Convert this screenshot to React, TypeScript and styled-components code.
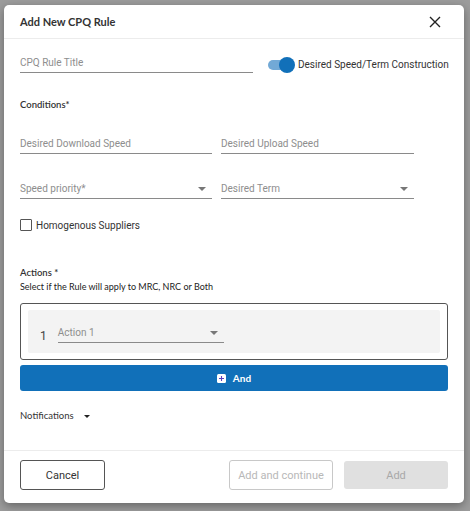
import styled, { createGlobalStyle } from "styled-components";

const GlobalStyle = createGlobalStyle`
  html, body {
    margin: 0;
    padding: 0;
    height: 511px;
    overflow: hidden;
  }
  body {
    font-family: Roboto, "Liberation Sans", sans-serif;
  }
`;

const blue = "#1170b9";

export default function App() {
  return (
    <>
      <GlobalStyle />
      <Backdrop>
        <Modal>
          <Header>
            <Title>Add New CPQ Rule</Title>
            <CloseButton aria-label="close">
              <svg width="12" height="12" viewBox="0 0 12 12">
                <path d="M1 1L11 11M11 1L1 11" stroke="#222" strokeWidth="1.4" />
              </svg>
            </CloseButton>
          </Header>

          <Body>
            <TopRow>
              <Field $width={233}>
                <Placeholder>CPQ Rule Title</Placeholder>
              </Field>
              <ToggleWrap>
                <Track>
                  <Thumb />
                </Track>
                <ToggleLabel>Desired Speed/Term Construction</ToggleLabel>
              </ToggleWrap>
            </TopRow>

            <SectionLabel $mt={25}>Conditions*</SectionLabel>

            <FieldRow $mt={19}>
              <Field $width={192}>
                <Placeholder>Desired Download Speed</Placeholder>
              </Field>
              <Field $width={193}>
                <Placeholder>Desired Upload Speed</Placeholder>
              </Field>
            </FieldRow>

            <FieldRow $mt={22}>
              <Field $width={192}>
                <Placeholder>Speed priority*</Placeholder>
                <Caret />
              </Field>
              <Field $width={193}>
                <Placeholder>Desired Term</Placeholder>
                <Caret />
              </Field>
            </FieldRow>

            <CheckRow>
              <CheckBox />
              <CheckLabel>Homogenous Suppliers</CheckLabel>
            </CheckRow>

            <SectionLabel $mt={35}>Actions *</SectionLabel>
            <SubText>Select if the Rule will apply to MRC, NRC or Both</SubText>

            <ActionBox>
              <ActionItem>
                <ActionIndex>1</ActionIndex>
                <Field $width={166}>
                  <Placeholder>Action 1</Placeholder>
                  <Caret />
                </Field>
              </ActionItem>
            </ActionBox>

            <AndButton>
              <PlusIcon>
                <svg width="9" height="9" viewBox="0 0 9 9">
                  <rect width="9" height="9" rx="1.5" fill="#fff" />
                  <path d="M4.5 2V7M2 4.5H7" stroke="#5a3fbf" strokeWidth="1.1" />
                </svg>
              </PlusIcon>
              And
            </AndButton>

            <NotifRow>
              Notifications
              <NotifCaret />
            </NotifRow>
          </Body>

          <Footer>
            <CancelButton>Cancel</CancelButton>
            <FooterRight>
              <OutlineDisabled>Add and continue</OutlineDisabled>
              <FilledDisabled>Add</FilledDisabled>
            </FooterRight>
          </Footer>
        </Modal>
      </Backdrop>
    </>
  );
}

//style
const Backdrop = styled.div`
  width: 470px;
  height: 511px;
  box-sizing: border-box;
  background-color: #9c9c9c;
  padding: 5px 6px 8px 4px;
`;

const Modal = styled.div`
  width: 460px;
  height: 498px;
  background: #fff;
  border-radius: 5px;
  box-shadow: 0 3px 10px rgba(0, 0, 0, 0.35);
  display: flex;
  flex-direction: column;
  overflow: hidden;
`;

const Header = styled.div`
  height: 33px;
  flex-shrink: 0;
  display: flex;
  align-items: center;
  justify-content: space-between;
  padding: 0 23px 0 16px;
  border-bottom: 1px solid #ececec;
`;

const Title = styled.h2`
  margin: 0;
  font-family: Lato, "Liberation Sans", sans-serif;
  font-size: 11px;
  font-weight: 700;
  color: #333;
`;

const CloseButton = styled.button`
  border: none;
  background: none;
  padding: 0;
  display: flex;
  cursor: pointer;
`;

const Body = styled.div`
  flex: 1;
  padding: 0 16px;
  overflow: hidden;
`;

const TopRow = styled.div`
  margin-top: 11px;
  display: flex;
  align-items: center;
  gap: 15px;
`;

const FieldRow = styled.div<{ $mt: number }>`
  margin-top: ${(p) => p.$mt}px;
  display: flex;
  gap: 9px;
`;

const Field = styled.div<{ $width: number }>`
  width: ${(p) => p.$width}px;
  height: 23px;
  box-sizing: border-box;
  border-bottom: 1px solid #8a8a8a;
  display: flex;
  align-items: flex-end;
  justify-content: space-between;
  padding: 0 6px 3px 0;
`;

const Placeholder = styled.span`
  font-size: 10px;
  color: #8e8e8e;
  line-height: 12px;
`;

const Caret = styled.span`
  width: 0;
  height: 0;
  border-left: 4px solid transparent;
  border-right: 4px solid transparent;
  border-top: 4px solid #777;
  margin-bottom: 4px;
`;

const ToggleWrap = styled.div`
  display: flex;
  align-items: center;
  gap: 5px;
  margin-top: 6px;
  margin-right: -16px;
`;

const Track = styled.div`
  position: relative;
  width: 22px;
  height: 10px;
  border-radius: 5px;
  background: #72a9d6;
  margin-right: 3px;
`;

const Thumb = styled.span`
  position: absolute;
  right: -5px;
  top: -3px;
  width: 16px;
  height: 16px;
  border-radius: 50%;
  background: ${blue};
`;

const ToggleLabel = styled.span`
  font-size: 10px;
  color: #333;
  white-space: nowrap;
`;

const SectionLabel = styled.div<{ $mt: number }>`
  margin-top: ${(p) => p.$mt}px;
  font-family: Lato, "Liberation Sans", sans-serif;
  font-size: 9.5px;
  font-weight: 600;
  color: #333;
  line-height: 14px;
`;

const SubText = styled.div`
  font-family: Lato, "Liberation Sans", sans-serif;
  font-size: 9px;
  color: #222;
  line-height: 13px;
`;

const CheckRow = styled.div`
  margin-top: 20px;
  display: flex;
  align-items: center;
  gap: 4px;
  height: 12px;
`;

const CheckBox = styled.span`
  width: 10px;
  height: 10px;
  border: 1px solid #555;
  border-radius: 1px;
`;

const CheckLabel = styled.span`
  font-size: 10px;
  color: #333;
`;

const ActionBox = styled.div`
  margin-top: 10px;
  height: 57px;
  box-sizing: border-box;
  border: 1px solid #555;
  border-radius: 3px;
  padding: 6px 7px;
`;

const ActionItem = styled.div`
  height: 100%;
  background: #f3f3f3;
  border-radius: 2px;
  display: flex;
  align-items: flex-start;
  padding: 10px 0 0 12px;
  box-sizing: border-box;
  gap: 11px;
`;

const ActionIndex = styled.span`
  font-size: 12px;
  color: #444;
  margin-top: 9px;
`;

const AndButton = styled.button`
  margin-top: 5px;
  width: 428px;
  height: 26px;
  border: none;
  border-radius: 3px;
  background: ${blue};
  color: #fff;
  font-family: Lato, "Liberation Sans", sans-serif;
  font-size: 10px;
  font-weight: 700;
  display: flex;
  align-items: center;
  justify-content: center;
  gap: 7px;
  cursor: pointer;
`;

const PlusIcon = styled.span`
  display: flex;
`;

const NotifRow = styled.div`
  margin-top: 18px;
  font-family: Lato, "Liberation Sans", sans-serif;
  font-size: 9.5px;
  color: #333;
  display: flex;
  align-items: center;
  gap: 10px;
  line-height: 14px;
`;

const NotifCaret = styled.span`
  width: 0;
  height: 0;
  border-left: 3.5px solid transparent;
  border-right: 3.5px solid transparent;
  border-top: 3.5px solid #222;
`;

const Footer = styled.div`
  height: 53px;
  flex-shrink: 0;
  box-sizing: border-box;
  border-top: 1px solid #ececec;
  padding: 9px 16px 0 16px;
  display: flex;
  justify-content: space-between;
  align-items: flex-start;
`;

const FooterRight = styled.div`
  display: flex;
  gap: 11px;
`;

const BaseButton = styled.button`
  height: 30px;
  box-sizing: border-box;
  border-radius: 3px;
  font-family: Roboto, "Liberation Sans", sans-serif;
  font-size: 11px;
  padding: 0;
`;

const CancelButton = styled(BaseButton)`
  width: 85px;
  border: 1px solid #555;
  background: #fff;
  color: #333;
  cursor: pointer;
`;

const OutlineDisabled = styled(BaseButton)`
  width: 104px;
  border: 1px solid #c8c8c8;
  background: #fff;
  color: #b8b8b8;
`;

const FilledDisabled = styled(BaseButton)`
  width: 104px;
  height: 28px;
  margin-top: 1px;
  border: none;
  background: #e0e0e0;
  color: #a8a8a8;
`;
